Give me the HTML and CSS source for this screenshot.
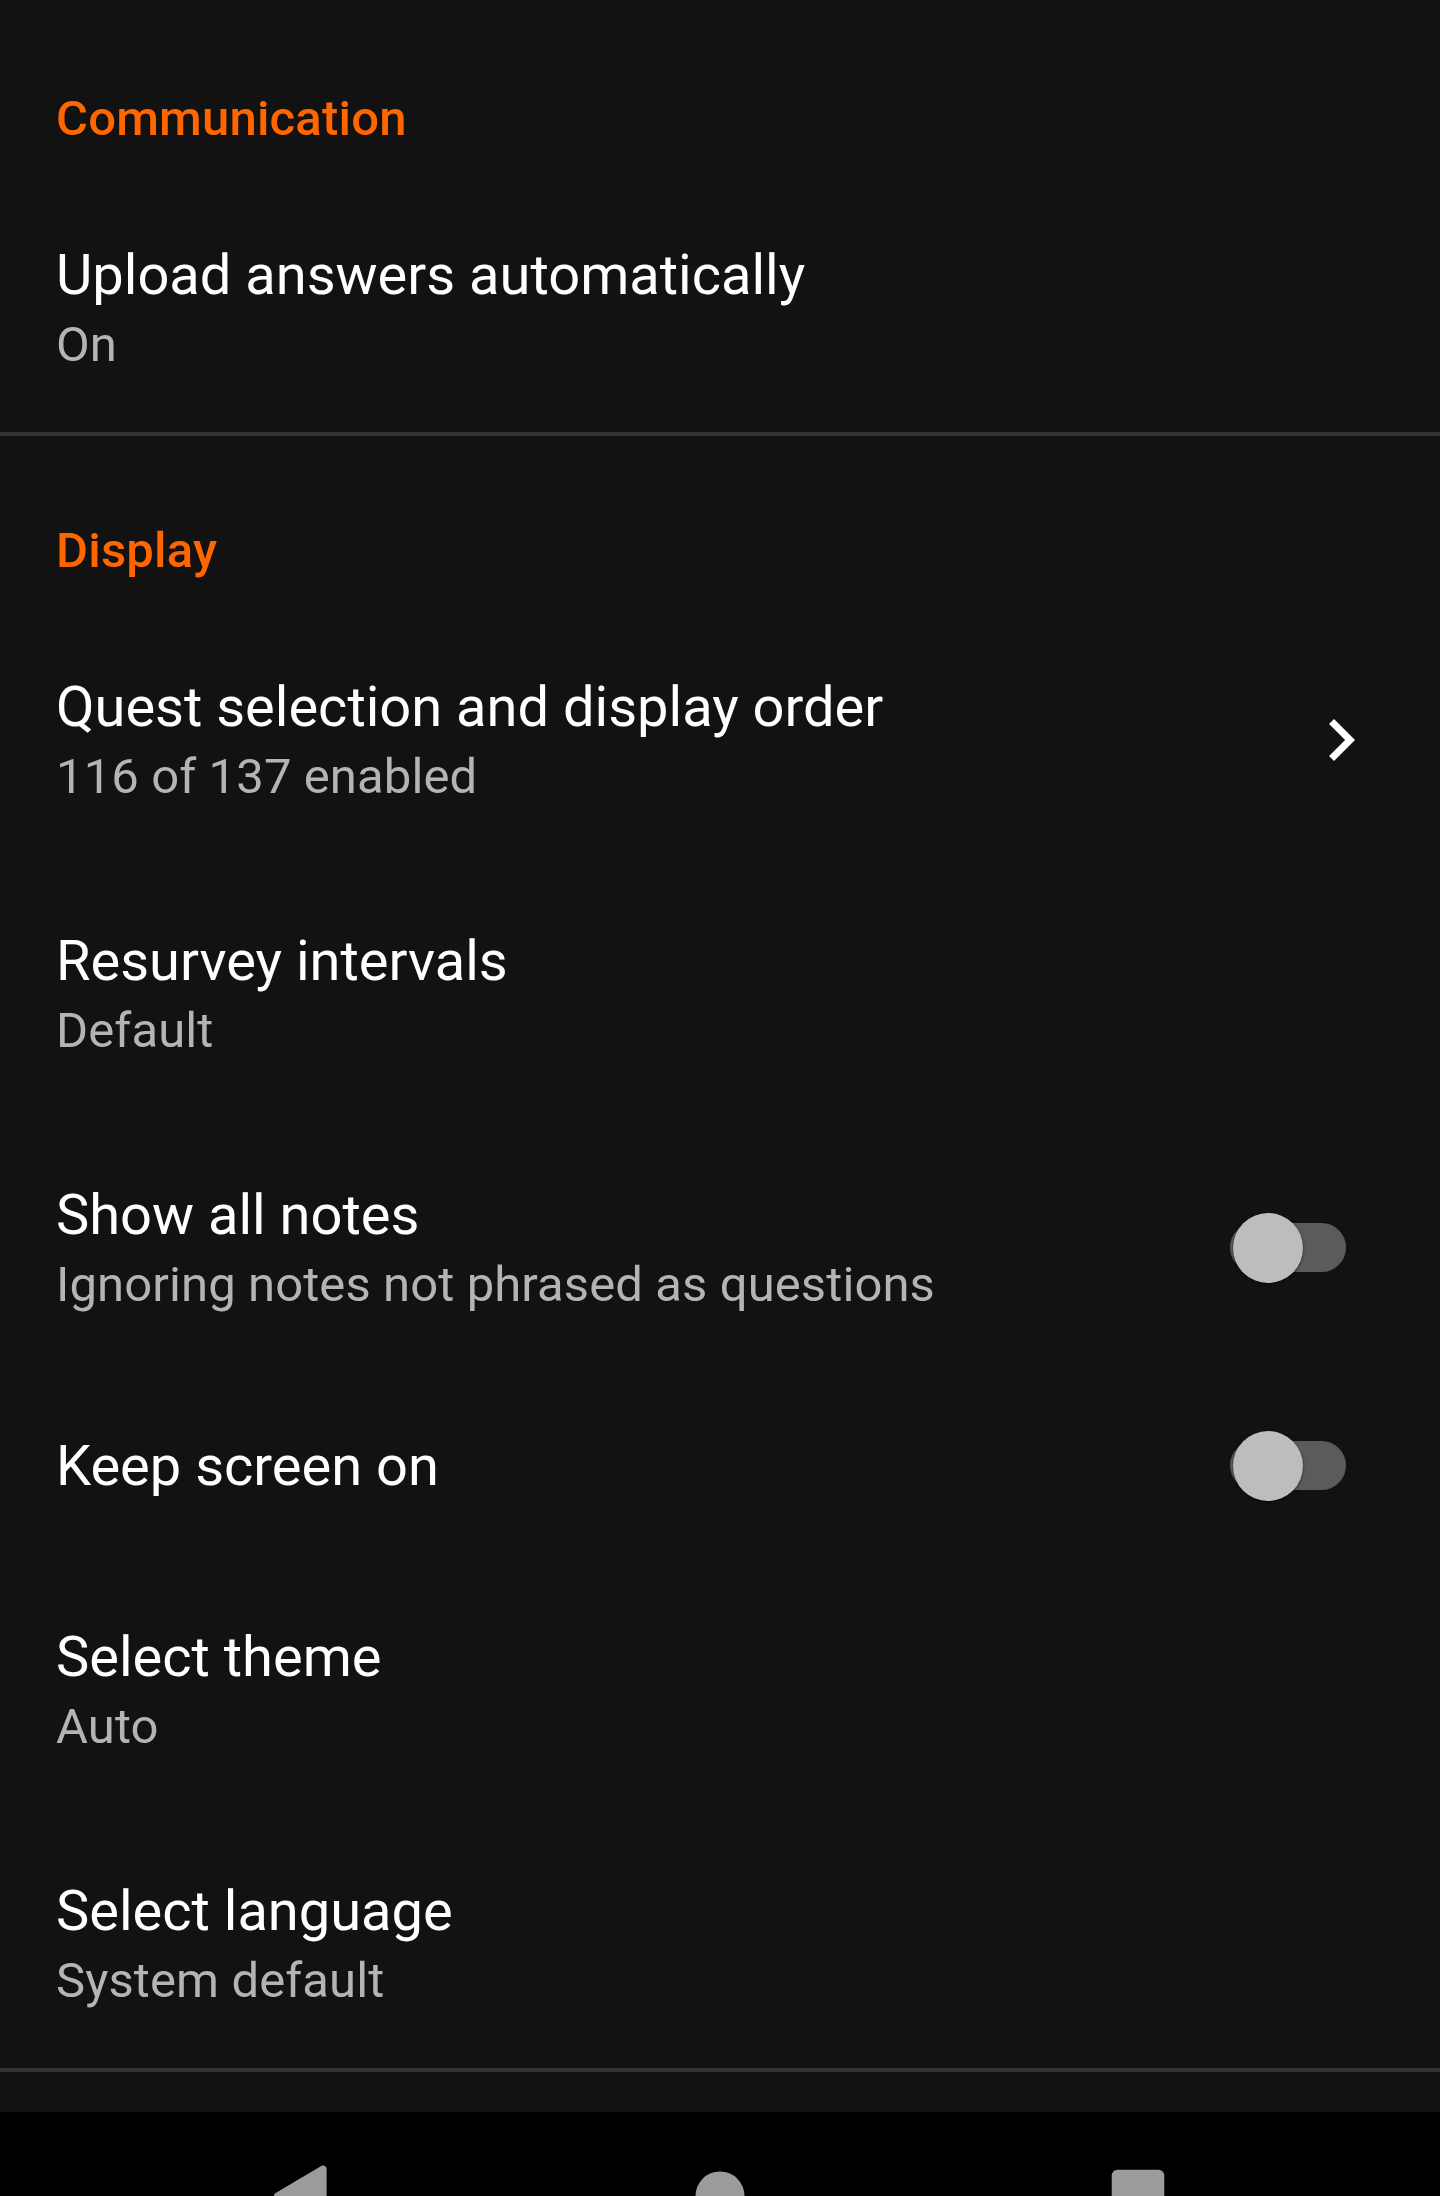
FILE: index.html
```html
<!DOCTYPE html>
<html lang="en">
<head>
<meta charset="utf-8">
<title>Settings</title>
<link rel="stylesheet" href="styles.css">
</head>
<body>
<div class="screen">
  <main class="content">
    <section class="group">
      <h2 class="group-title">Communication</h2>
      <div class="pref">
        <div class="pref-text">
          <div class="pref-title">Upload answers automatically</div>
          <div class="pref-summary">On</div>
        </div>
      </div>
    </section>
    <hr class="divider">
    <section class="group">
      <h2 class="group-title">Display</h2>
      <div class="pref">
        <div class="pref-text">
          <div class="pref-title">Quest selection and display order</div>
          <div class="pref-summary">116 of 137 enabled</div>
        </div>
        <svg class="chevron" viewBox="0 0 24 24" aria-hidden="true"><path d="M10 6L8.59 7.41 13.17 12l-4.58 4.59L10 18l6-6z"/></svg>
      </div>
      <div class="pref">
        <div class="pref-text">
          <div class="pref-title">Resurvey intervals</div>
          <div class="pref-summary">Default</div>
        </div>
      </div>
      <div class="pref">
        <div class="pref-text">
          <div class="pref-title">Show all notes</div>
          <div class="pref-summary">Ignoring notes not phrased as questions</div>
        </div>
        <div class="switch"><span class="track"></span><span class="thumb"></span></div>
      </div>
      <div class="pref single">
        <div class="pref-text">
          <div class="pref-title">Keep screen on</div>
        </div>
        <div class="switch"><span class="track"></span><span class="thumb"></span></div>
      </div>
      <div class="pref">
        <div class="pref-text">
          <div class="pref-title">Select theme</div>
          <div class="pref-summary">Auto</div>
        </div>
      </div>
      <div class="pref">
        <div class="pref-text">
          <div class="pref-title">Select language</div>
          <div class="pref-summary">System default</div>
        </div>
      </div>
    </section>
    <hr class="divider">
  </main>
  <nav class="navbar">
    <div class="nav-btn">
      <svg viewBox="0 0 28 28" aria-hidden="true"><path d="M6.49,14.86c-0.66-0.39-0.66-1.33,0-1.72l6.47-3.84l6.56-3.890c0.67-0.4,1.51,0.09,1.51,0.86v7.73v7.73c0,0.77-0.84,1.26-1.51,0.86l-6.56-3.89L6.49,14.86z"/></svg>
    </div>
    <div class="nav-btn">
      <svg viewBox="0 0 28 28" aria-hidden="true"><circle cx="14" cy="14" r="7"/></svg>
    </div>
    <div class="nav-btn">
      <svg viewBox="0 0 28 28" aria-hidden="true"><rect x="6.5" y="6.5" width="15" height="15" rx="1.6"/></svg>
    </div>
  </nav>
</div>
</body>
</html>
```
FILE: styles.css
```css
* {
  box-sizing: border-box;
}

html, body {
  margin: 0;
  padding: 0;
  background: #121212;
}

body {
  font-family: Roboto, "Noto Sans", "Liberation Sans", sans-serif;
  color: #ffffff;
}

.screen {
  width: 1440px;
  height: 2196px;
  display: flex;
  flex-direction: column;
  overflow: hidden;
}

.content {
  height: 2112px;
  padding-top: 4px;
  background: #121212;
}

.group-title {
  margin: 0;
  padding: 86px 56px 30px;
  font-size: 49px;
  line-height: 58px;
  font-weight: 500;
  letter-spacing: 0.2px;
  color: #ff6600;
}

.pref {
  display: flex;
  align-items: center;
  padding: 64px 56px 58px;
  min-height: 254px;
}

.pref.single {
  min-height: 184px;
  padding-top: 59px;
  padding-bottom: 59px;
}

.pref-text {
  flex: 1;
  min-width: 0;
}

.pref-title {
  font-size: 56px;
  line-height: 66px;
  font-weight: 400;
  color: #ffffff;
}

.pref-summary {
  margin-top: 8px;
  font-size: 49px;
  line-height: 58px;
  font-weight: 400;
  letter-spacing: 0.1px;
  color: #b4b4b4;
}

.divider {
  margin: 0;
  border: 0;
  height: 4px;
  background: #323232;
}

.chevron {
  width: 84px;
  height: 84px;
  margin-right: 1px;
  fill: #ffffff;
  flex: none;
}

.switch {
  position: relative;
  flex: none;
  width: 116px;
  height: 70px;
  margin-right: 38px;
}

.track {
  position: absolute;
  left: 0;
  right: 0;
  top: 10px;
  height: 49px;
  border-radius: 25px;
  background: #5b5b5b;
}

.thumb {
  position: absolute;
  left: 3px;
  top: 0;
  width: 70px;
  height: 70px;
  border-radius: 50%;
  background: #bdbdbd;
  box-shadow: 0 1px 3px rgba(0, 0, 0, 0.6);
}

.navbar {
  height: 84px;
  background: #000000;
  display: flex;
  justify-content: center;
  overflow: hidden;
}

.nav-btn {
  width: 418px;
  height: 168px;
  flex: none;
  display: flex;
  align-items: center;
  justify-content: center;
}

.nav-btn svg {
  width: 98px;
  height: 98px;
  fill: #9b9b9b;
}
```
